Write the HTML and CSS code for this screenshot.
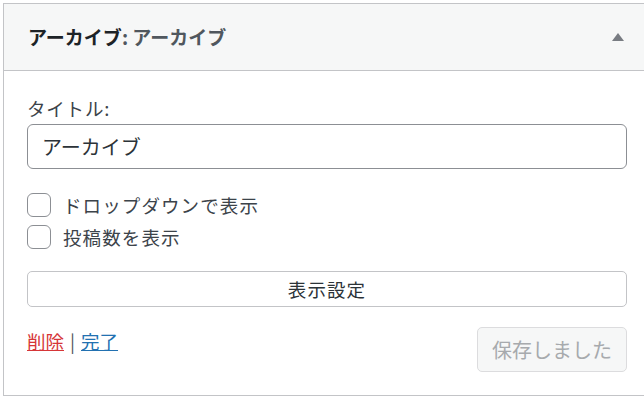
FILE: index.html
```html
<!DOCTYPE html>
<html lang="ja">
<head>
<meta charset="utf-8">
<title>アーカイブ</title>
<link rel="stylesheet" href="styles.css">
</head>
<body>
<div class="widget">
  <div class="widget-top">
    <h3 class="widget-title">アーカイブ<span class="in-title">: アーカイブ</span></h3>
    <span class="toggle"></span>
  </div>
  <div class="widget-inside">
    <label class="field-label" for="t">タイトル:</label>
    <input class="text-input" id="t" type="text" value="アーカイブ">
    <div class="checks">
      <label class="check-row"><span class="checkbox"></span>ドロップダウンで表示</label>
      <label class="check-row"><span class="checkbox"></span>投稿数を表示</label>
    </div>
    <button class="wide-btn" type="button">表示設定</button>
    <div class="widget-footer">
      <div class="links"><a class="delete" href="#">削除</a><span class="sep">|</span><a class="done" href="#">完了</a></div>
      <button class="save-btn" type="button" disabled>保存しました</button>
    </div>
  </div>
</div>
</body>
</html>
```
FILE: styles.css
```css
html, body {
  margin: 0;
  padding: 0;
  background: #fff;
  overflow: hidden;
}
body {
  width: 644px;
  height: 407px;
  font-family: "Noto Sans CJK JP", "Noto Sans", sans-serif;
  color: #1d2327;
}
.widget {
  margin: 3px 0 0 3px;
  width: 646px;
  border: 1px solid #c3c4c7;
  background: #fff;
}
.widget-top {
  height: 66px;
  background: #f6f7f7;
  border-bottom: 1px solid #c3c4c7;
  display: flex;
  align-items: center;
  justify-content: space-between;
  padding: 0 26px 0 24px;
}
.widget-title {
  margin: 0;
  font-size: 19px;
  font-weight: 700;
  color: #1d2327;
  line-height: 28px;
}
.in-title {
  color: #50575e;
}
.toggle {
  width: 0;
  height: 0;
  border-left: 6px solid transparent;
  border-right: 6px solid transparent;
  border-bottom: 8px solid #787c82;
}
.widget-inside {
  padding: 24px 23px 23px 23px;
}
.field-label {
  display: block;
  font-size: 18.5px;
  letter-spacing: 0.8px;
  line-height: 26px;
  color: #3c434a;
  height: 26px;
}
.text-input {
  display: block;
  box-sizing: border-box;
  margin-top: 3px;
  width: 600px;
  height: 45px;
  border: 1px solid #8c8f94;
  border-radius: 6px;
  padding: 0 14px;
  font-family: inherit;
  font-size: 20px;
  color: #2c3338;
  background: #fff;
}
.checks {
  margin-top: 20px;
}
.check-row {
  display: flex;
  align-items: center;
  height: 32px;
  font-size: 18.5px;
  letter-spacing: 1.1px;
  color: #3c434a;
}
.checkbox {
  box-sizing: border-box;
  width: 24px;
  height: 24px;
  border: 1px solid #8c8f94;
  border-radius: 6px;
  background: #fff;
  margin-right: 12px;
}
.wide-btn {
  display: block;
  box-sizing: border-box;
  margin-top: 18px;
  width: 600px;
  height: 36px;
  border: 1px solid #c3c4c7;
  border-radius: 5px;
  background: #fff;
  font-family: inherit;
  font-size: 18.5px;
  letter-spacing: 1.1px;
  color: #2c3338;
  padding: 0;
}
.widget-footer {
  margin-top: 20px;
  display: flex;
  justify-content: space-between;
  align-items: flex-start;
}
.links {
  font-size: 18.5px;
  line-height: 26px;
  padding-top: 1px;
}
.delete {
  color: #d63638;
  text-decoration: underline;
}
.done {
  color: #2271b1;
  text-decoration: underline;
}
.sep {
  color: #50575e;
  margin: 0 6px;
}
.save-btn {
  box-sizing: border-box;
  width: 150px;
  height: 45px;
  border: 1px solid #dcdcde;
  border-radius: 5px;
  background: #f6f7f7;
  color: #a7aaad;
  font-family: inherit;
  font-size: 20px;
  padding: 0;
}
```
